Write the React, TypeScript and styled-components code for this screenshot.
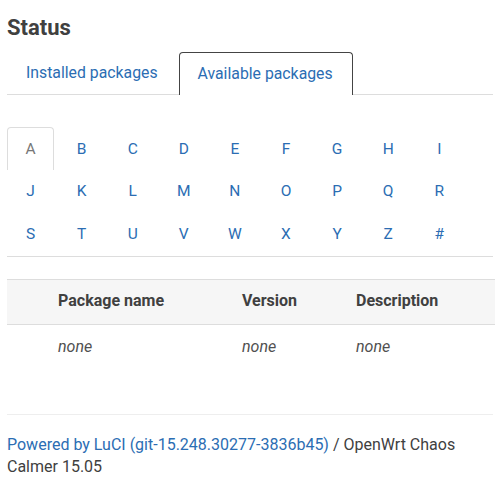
import styled, { createGlobalStyle } from "styled-components";

const LETTERS = "ABCDEFGHIJKLMNOPQRSTUVWXYZ#".split("");

const GlobalStyle = createGlobalStyle`
  body {
    margin: 0;
    background: #fff;
    font-family: Roboto, "Liberation Sans", sans-serif;
    color: #404040;
  }
`;

const Page = styled.div`
  padding: 0 7px;
  width: 486px;
`;

const Title = styled.h2`
  margin: 0;
  padding-top: 14px;
  height: 38px;
  font-size: 22px;
  font-weight: bold;
  color: #404040;
  line-height: 28px;
`;

const TabBar = styled.ul`
  list-style: none;
  margin: 0;
  padding: 0;
  display: flex;
  gap: 1px;
  border-bottom: 1px solid #ddd;
`;

const Tab = styled.li<{ $active?: boolean }>`
  height: 39px;
  padding: 0 19px 2px 18px;
  display: flex;
  align-items: center;
  font-size: 15.8px;
  color: #2b6db3;
  border: 1px solid ${(p) => (p.$active ? "#444" : "transparent")};
  border-bottom: none;
  border-radius: 4px 4px 0 0;
  margin-bottom: -1px;
  background: #fff;
  ${(p) => p.$active && "height: 40px;"}
`;

const Letters = styled.div`
  margin-top: 32px;
  display: grid;
  grid-template-columns: repeat(9, 47px);
  grid-auto-rows: 42.5px;
  column-gap: 4.1px;
  padding-bottom: 1px;
  border-bottom: 1px solid #ddd;
`;

const Letter = styled.div<{ $active?: boolean }>`
  display: flex;
  align-items: center;
  justify-content: center;
  font-size: 15.5px;
  color: ${(p) => (p.$active ? "#777" : "#2b6db3")};
  border: 1px solid ${(p) => (p.$active ? "#ddd" : "transparent")};
  border-bottom: none;
  border-radius: 4px 4px 0 0;
`;

const Table = styled.table`
  margin-top: 22px;
  width: 488px;
  border-collapse: collapse;
  font-size: 16px;
`;

const HeadRow = styled.tr`
  background: #f6f6f6;
  border-top: 1px solid #ddd;
  border-bottom: 1px solid #ddd;
`;

const Th = styled.th`
  height: 42px;
  padding: 0 8px 2px;
  text-align: left;
  font-weight: bold;
  color: #404040;
`;

const Td = styled.td`
  height: 43px;
  padding: 0 8px;
  font-style: italic;
  color: #505050;
`;

const Footer = styled.footer`
  margin-top: 46px;
  border-top: 1px solid #eee;
  padding-top: 19px;
  font-size: 16px;
  line-height: 22px;
  color: #404040;
`;

const Link = styled.a`
  color: #2b6db3;
  text-decoration: none;
`;

export default function App() {
  return (
    <Page>
      <GlobalStyle />
      <Title>Status</Title>
      <TabBar>
        <Tab>Installed packages</Tab>
        <Tab $active>Available packages</Tab>
      </TabBar>
      <Letters>
        {LETTERS.map((l) => (
          <Letter key={l} $active={l === "A"}>
            {l}
          </Letter>
        ))}
      </Letters>
      <Table>
        <colgroup>
          <col style={{ width: 43 }} />
          <col style={{ width: 184 }} />
          <col style={{ width: 114 }} />
          <col />
        </colgroup>
        <thead>
          <HeadRow>
            <Th />
            <Th>Package name</Th>
            <Th>Version</Th>
            <Th>Description</Th>
          </HeadRow>
        </thead>
        <tbody>
          <tr>
            <Td />
            <Td>none</Td>
            <Td>none</Td>
            <Td>none</Td>
          </tr>
        </tbody>
      </Table>
      <Footer>
        <Link href="#">Powered by LuCI (git-15.248.30277-3836b45)</Link> / OpenWrt Chaos
        Calmer 15.05
      </Footer>
    </Page>
  );
}
